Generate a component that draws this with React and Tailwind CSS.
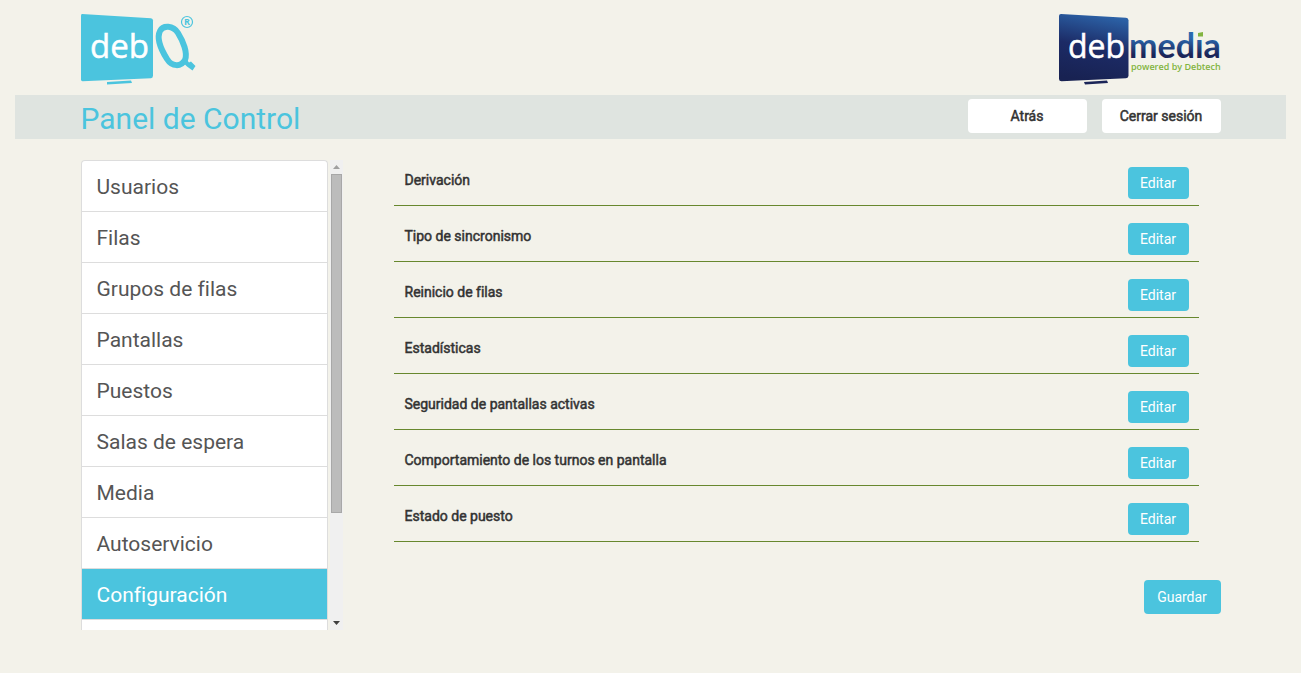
const sections = [
  'Usuarios',
  'Filas',
  'Grupos de filas',
  'Pantallas',
  'Puestos',
  'Salas de espera',
  'Media',
  'Autoservicio',
  'Configuración',
];

const settings = [
  'Derivación',
  'Tipo de sincronismo',
  'Reinicio de filas',
  'Estadísticas',
  'Seguridad de pantallas activas',
  'Comportamiento de los turnos en pantalla',
  'Estado de puesto',
];

function DebQLogo() {
  return (
    <svg width="118" height="74" viewBox="1 0 118 74" role="img" aria-label="debQ">
      <path d="M2 1 L71 5.200 Q73 5.400 73 7.500 V62.500 Q73 65 71 65.200 L2.500 68.200 Q1 68.200 1 66.500 V2.500 Q1 1 2 1Z" fill="#4bc4de" />
      <path d="M27 69 L51 67.500 L52 70 L27 71.500Z" fill="#4bc4de" />
      <text x="10" y="45" fontSize="33" fontFamily="'Open Sans', sans-serif" fill="#fff" stroke="#fff" strokeWidth="0.500">deb</text>
      <path d="M80 18 C83 12 93 12 98 20 C103 28 108 40 105 47 C101 54 92 54 87 46 C82 38 76 26 80 18Z" fill="none" stroke="#4bc4de" strokeWidth="6" />
      <path d="M102 48.500 L105.500 45 L109 49.500 L111 48.500 L115.500 53 L112.500 57.500 L107 53.500Z" fill="#4bc4de" />
      <circle cx="107" cy="9" r="5.500" fill="none" stroke="#4bc4de" strokeWidth="1.200" />
      <text x="104" y="12" fontSize="9" fontWeight="700" fontFamily="'Open Sans', sans-serif" fill="#4bc4de">R</text>
    </svg>
  );
}

function DebmediaLogo() {
  return (
    <svg width="162" height="74" viewBox="1 0 162 74" role="img" aria-label="debmedia powered by Debtech">
      <defs>
        <linearGradient id="screen" x1="0.600" y1="0" x2="0.400" y2="1">
          <stop offset="0" stopColor="#2c63a8" />
          <stop offset="0.500" stopColor="#1c2b66" />
          <stop offset="1" stopColor="#182252" />
        </linearGradient>
        <linearGradient id="word" x1="0" y1="18" x2="0" y2="46" gradientUnits="userSpaceOnUse">
          <stop offset="0.250" stopColor="#2b68ae" />
          <stop offset="0.850" stopColor="#1b2558" />
        </linearGradient>
      </defs>
      <path d="M3 1 L68 4.800 Q70.500 5 70.500 7.500 V62.500 Q70.500 65 68 65.200 L3.500 68.200 Q1 68.200 1 66 V3 Q1 1 3 1Z" fill="url(#screen)" />
      <path d="M26 69 L49 67.600 L50 70 L27 71.500Z" fill="#1b2558" />
      <text x="10" y="45" fontSize="32" fontFamily="'Open Sans', sans-serif" fill="#fff" stroke="#fff" strokeWidth="0.500">deb</text>
      <text x="71" y="45" fontSize="34" fontWeight="700" fontFamily="Lato, sans-serif" fill="url(#word)">medıa</text>
      <path d="M140 20 L145 19 V23.500 H140Z" fill="#82b440" />
      <text x="73" y="57" fontSize="9" fontWeight="600" fontFamily="'Open Sans', sans-serif" fill="#82b440">powered by Debtech</text>
    </svg>
  );
}

function Scrollbar() {
  return (
    <div className="flex w-[13px] flex-col items-center bg-[#f0f0f0]" aria-hidden="true">
      <div className="flex h-[14px] items-center">
        <svg width="7" height="4" viewBox="0 0 7 4"><path d="M3.500 0 L7 4 H0Z" fill="#a0a0a0" /></svg>
      </div>
      <div className="h-[339px] w-[11px] border border-[#a8a8a8] bg-[#bcbcbc]" />
      <div className="mt-auto flex h-[14px] items-center">
        <svg width="7" height="4" viewBox="0 0 7 4"><path d="M0 0 H7 L3.500 4Z" fill="#404040" /></svg>
      </div>
    </div>
  );
}

export default function App() {
  return (
    <div className="min-h-screen bg-[#f3f2ea] px-[15px] font-['Roboto',sans-serif] text-sm text-[#333] [font-variant-ligatures:none]">
      <header>
        <div className="mx-auto flex h-[95px] max-w-[1140px] items-start justify-between pt-[13px]">
          <DebQLogo />
          <DebmediaLogo />
        </div>
        <div className="bg-[#dfe4e0]">
          <div className="mx-auto flex h-11 max-w-[1140px] items-start justify-between">
            <h1 className="pt-1 text-[30px] leading-10 text-[#4bc4de]">Panel de Control</h1>
            <div className="flex gap-[15px] pt-1">
              <button type="button" className="h-[34px] w-[119px] rounded bg-white [-webkit-text-stroke:0.5px]">Atrás</button>
              <button type="button" className="h-[34px] w-[119px] rounded bg-white [-webkit-text-stroke:0.5px]">Cerrar sesión</button>
            </div>
          </div>
        </div>
      </header>

      <div className="mx-auto flex max-w-[1140px] items-start">
        <nav className="mt-[21px] flex h-[470px] gap-[2px]" aria-label="Secciones">
          <ul className="w-[247px] overflow-hidden rounded-t border-x border-t border-[#ddd] bg-white">
            {sections.map((name) => (
              <li key={name} className="border-b border-[#ddd]">
                <a
                  href="#"
                  aria-current={name === 'Configuración' ? 'page' : undefined}
                  className={
                    name === 'Configuración'
                      ? 'block h-[50px] bg-[#4bc4de] px-[15px] text-[21px] leading-[52px] text-white'
                      : 'block h-[50px] px-[15px] text-[21px] leading-[52px] text-[#555]'
                  }
                >
                  {name}
                </a>
              </li>
            ))}
          </ul>
          <Scrollbar />
        </nav>

        <main className="ml-[51px] flex-1 pt-[11px]">
          <ul className="mr-[22px]">
            {settings.map((name) => (
              <li key={name} className="flex h-14 items-start justify-between border-b border-[#67882e] pr-[10px] pl-[11px] pt-[17px]">
                <span className="pt-[3px] leading-5 [-webkit-text-stroke:0.5px]">{name}</span>
                <button type="button" aria-label={`Editar ${name}`} className="h-8 w-[61px] rounded bg-[#4bc4de] text-white">Editar</button>
              </li>
            ))}
          </ul>
          <div className="mt-[38px] flex justify-end">
            <button type="button" className="h-[34px] w-[77px] rounded bg-[#4bc4de] text-white">Guardar</button>
          </div>
        </main>
      </div>
    </div>
  );
}
